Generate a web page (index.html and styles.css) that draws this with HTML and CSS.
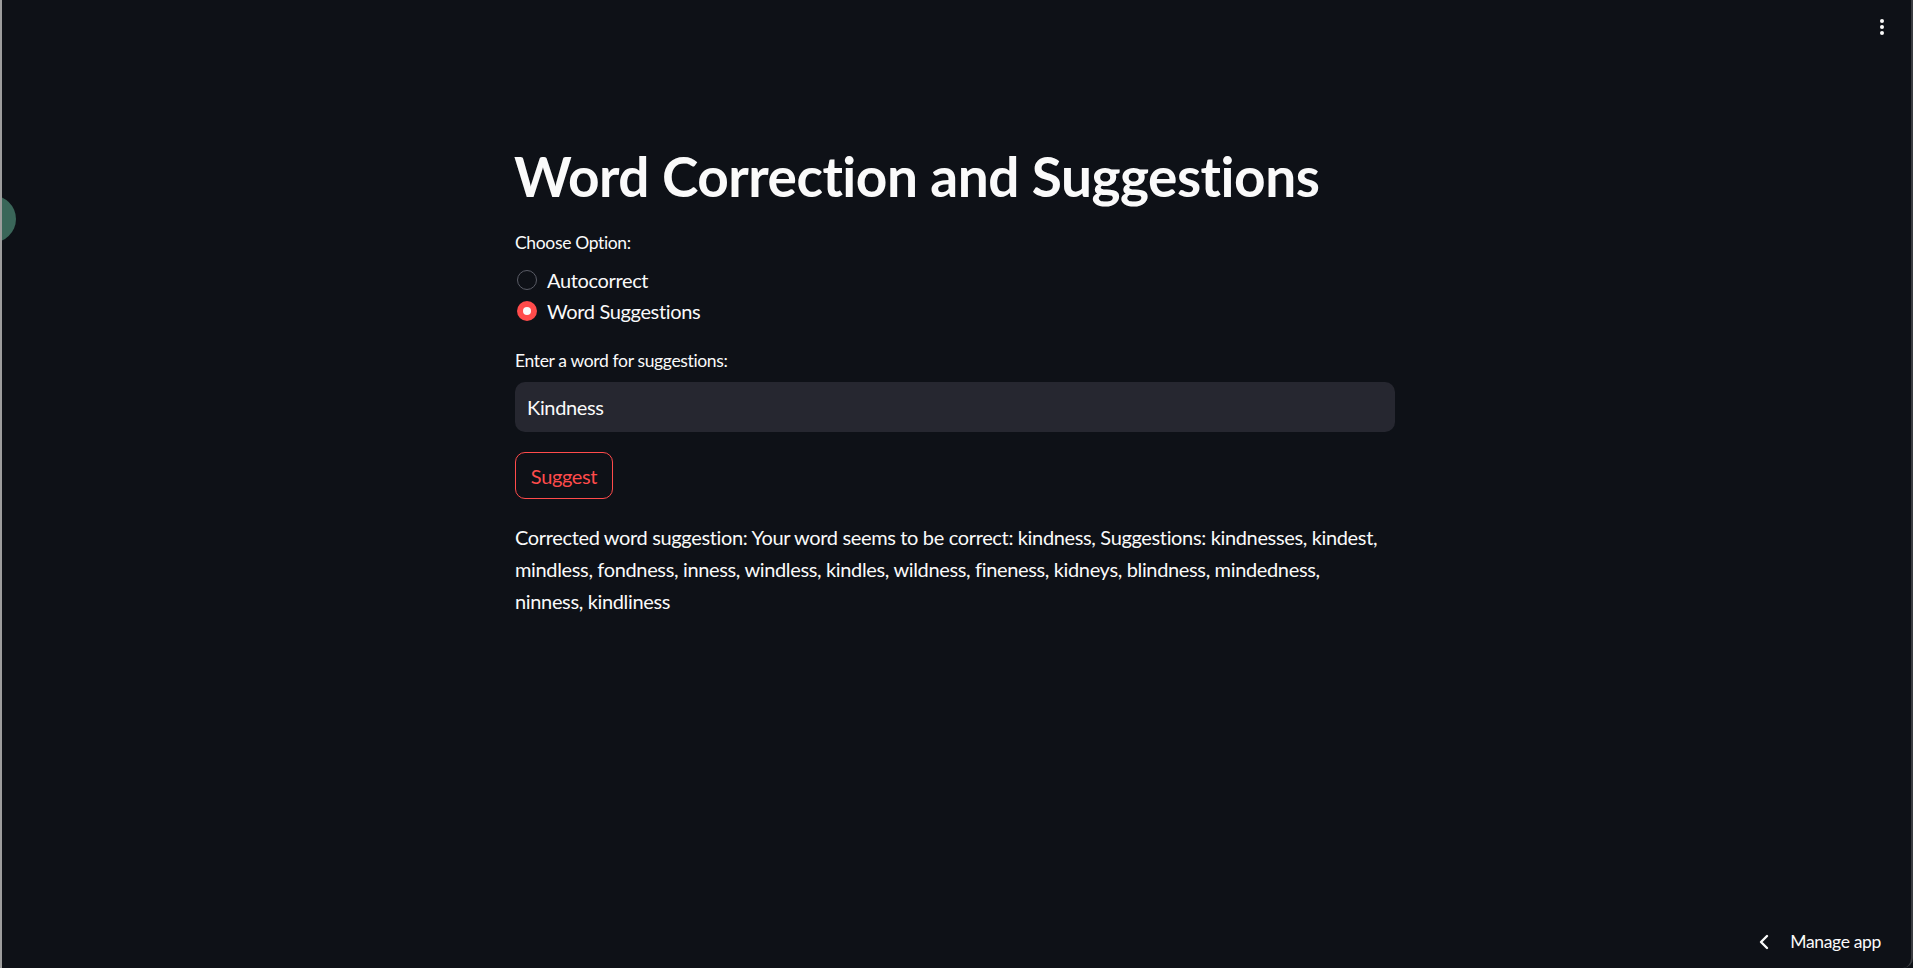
FILE: index.html
```html
<!DOCTYPE html>
<html lang="en">
<head>
<meta charset="utf-8">
<title>Word Correction and Suggestions</title>
<link rel="stylesheet" href="styles.css">
</head>
<body>
<div class="frame">
  <header class="toolbar">
    <button class="menu-btn" aria-label="Main menu">
      <svg width="6" height="18" viewBox="0 0 6 18"><circle cx="3" cy="3" r="2" fill="#fafafa"/><circle cx="3" cy="9" r="2" fill="#fafafa"/><circle cx="3" cy="15" r="2" fill="#fafafa"/></svg>
    </button>
  </header>
  <main class="main">
    <div class="block">
      <h1 class="title">Word Correction and Suggestions</h1>
      <div class="radio-group">
        <div class="label label-choose">Choose Option:</div>
        <label class="radio"><span class="dot"></span><span>Autocorrect</span></label>
        <label class="radio"><span class="dot dot-on"></span><span>Word Suggestions</span></label>
      </div>
      <div class="field">
        <div class="label">Enter a word for suggestions:</div>
        <div class="input">Kindness</div>
      </div>
      <button class="btn">Suggest</button>
      <p class="result">Corrected word suggestion: Your word seems to be correct: kindness, Suggestions: kindnesses, kindest, mindless, fondness, inness, windless, kindles, wildness, fineness, kidneys, blindness, mindedness, ninness, kindliness</p>
    </div>
  </main>
  <div class="manage">
    <svg width="12" height="16" viewBox="0 0 12 16"><path d="M9 2 L3 8 L9 14" stroke="#fafafa" stroke-width="2.4" fill="none" stroke-linecap="round" stroke-linejoin="round"/></svg>
    <span>Manage app</span>
  </div>
  <div class="bubble"></div>
</div>
</body>
</html>
```

FILE: styles.css
```css
* { box-sizing: border-box; }
html, body { margin: 0; height: 100%; }
body {
  background: #0e1117;
  color: #fafafa;
  font-family: "Source Sans Pro", Lato, "Noto Sans", sans-serif;
  letter-spacing: -0.35px;
  overflow: hidden;
}
.frame {
  position: relative;
  height: 968px;
  border-left: 2px solid #9d9d9d;
  border-right: 2px solid #3a3c41;
  border-bottom-right-radius: 10px;
  overflow: hidden;
}
.toolbar {
  display: flex;
  justify-content: flex-end;
  padding: 18px 26px 0 0;
  height: 40px;
}
.menu-btn {
  background: none;
  border: 0;
  padding: 0;
  width: 6px;
  height: 18px;
}
.main {
  display: flex;
  justify-content: center;
}
.block {
  width: 880px;
  margin-left: -3px;
  padding-top: 103px;
  display: flex;
  flex-direction: column;
  align-items: flex-start;
}
.title {
  margin: 0 0 0 -1px;
  font-size: 55px;
  font-weight: 700;
  line-height: 66px;
  letter-spacing: -0.5px;
}
.label {
  font-size: 17.5px;
  line-height: 22px;
}
.radio-group {
  margin-top: 23px;
  display: flex;
  flex-direction: column;
}
.label-choose { margin-bottom: 10px; }
.radio {
  display: flex;
  align-items: center;
  height: 31px;
  font-size: 20px;
  gap: 10px;
  padding-left: 2px;
}
.dot {
  width: 20px;
  height: 20px;
  border-radius: 50%;
  border: 1.5px solid #5a5c66;
  background: #0e1117;
  flex: none;
}
.dot-on {
  border: 0;
  background: #ff4b4b;
  display: flex;
  align-items: center;
  justify-content: center;
}
.dot-on::after {
  content: "";
  width: 8px;
  height: 8px;
  border-radius: 50%;
  background: #fafafa;
}
.field {
  margin-top: 24px;
  width: 100%;
  display: flex;
  flex-direction: column;
}
.field .label { margin-bottom: 10px; }
.input {
  height: 50px;
  background: #262730;
  border-radius: 10px;
  padding: 0 12px;
  display: flex;
  align-items: center;
  font-size: 20px;
}
.btn {
  margin-top: 20px;
  height: 47px;
  width: 98px;
  background: transparent;
  border: 1.5px solid #ff4b4b;
  border-radius: 10px;
  color: #ff4b4b;
  font-family: inherit;
  letter-spacing: inherit;
  font-size: 20px;
  padding: 0;
}
.result {
  margin: 22px 0 0;
  padding-right: 10px;
  font-size: 20px;
  line-height: 32px;
}
.manage {
  position: absolute;
  right: 30px;
  bottom: 16px;
  display: flex;
  align-items: center;
  gap: 20px;
  font-size: 17.5px;
}
.bubble {
  position: absolute;
  left: -36px;
  top: 195px;
  width: 50px;
  height: 48px;
  border-radius: 50%;
  background: #3a6659;
}
```
